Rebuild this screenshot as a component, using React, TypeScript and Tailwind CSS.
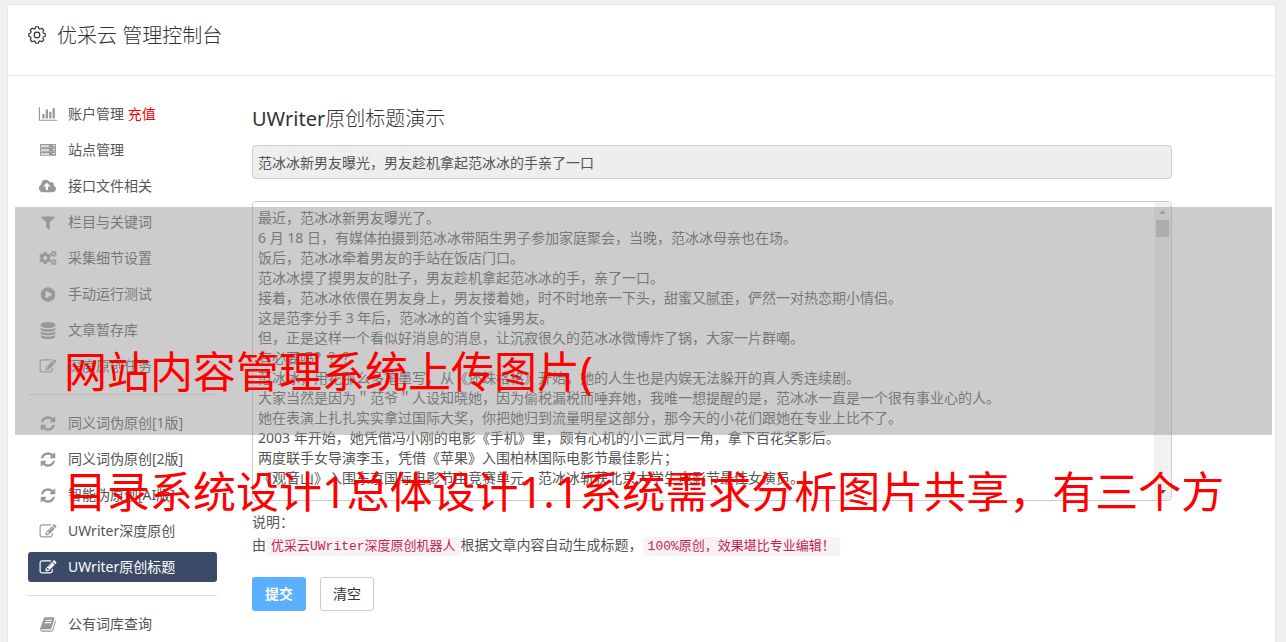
import type { ReactNode } from 'react'
import { FaCogs } from 'react-icons/fa'

const ICONS = {
  chart: 'M640 896v512h-256v-512h256zm384-512v1024h-256v-1024h256zm1024 1152v128h-2048v-1536h128v1408h1920zm-640-896v768h-256v-768h256zm384-384v1152h-256v-1152h256z',
  upload: 'M1280 928q0-14-9-23l-352-352q-9-9-23-9t-23 9l-351 351q-10 12-10 24 0 14 9 23t23 9h224v352q0 13 9.5 22.5t22.5 9.5h192q13 0 22.5-9.5t9.5-22.5v-352h224q13 0 22.5-9.5t9.5-22.5zm640 288q0 159-112.5 271.5t-271.5 112.5h-1088q-185 0-316.5-131.5t-131.5-316.5q0-130 70-240t188-165q-2-30-2-43 0-212 150-362t362-150q156 0 285.5 87t188.5 231q71-62 166-62 106 0 181 75t75 181q0 76-41 138 130 31 213.5 135.5t83.5 238.5z',
  filter: 'M1595 295q17 41-14 70l-493 493v742q0 42-39 59-13 5-25 5-27 0-45-19l-256-256q-19-19-19-45v-486l-493-493q-31-29-14-70 17-39 59-39h1280q42 0 59 39z',
  play: 'M896 128q209 0 385.5 103t279.5 279.5 103 385.5-103 385.5-279.5 279.5-385.5 103-385.5-103-279.5-279.5-103-385.5 103-385.5 279.5-279.5 385.5-103zm384 823q32-18 32-55t-32-55l-544-320q-31-19-64-1-32 19-32 56v640q0 37 32 56 16 8 32 8 17 0 32-9z',
  database: 'M896 768q237 0 443-43t325-127v170q0 69-103 128t-280 93.5-385 34.5-385-34.5-280-93.5-103-128v-170q119 84 325 127t443 43zm0 768q237 0 443-43t325-127v170q0 69-103 128t-280 93.5-385 34.5-385-34.5-280-93.5-103-128v-170q119 84 325 127t443 43zm0-384q237 0 443-43t325-127v170q0 69-103 128t-280 93.5-385 34.5-385-34.5-280-93.5-103-128v-170q119 84 325 127t443 43zm0-1152q208 0 385 34.5t280 93.5 103 128v128q0 69-103 128t-280 93.5-385 34.5-385-34.5-280-93.5-103-128v-128q0-69 103-128t280-93.5 385-34.5z',
  edit: 'M888 1184l116-116-152-152-116 116v56h96v96h56zm440-720q-16-16-33 1l-350 350q-17 17-1 33t33-1l350-350q17-17 1-33zm80 594v190q0 119-84.5 203.5t-203.5 84.5h-832q-119 0-203.5-84.5t-84.5-203.5v-832q0-119 84.5-203.5t203.5-84.5h832q63 0 117 25 15 7 18 23 3 17-9 29l-49 49q-14 14-32 8-23-6-45-6h-832q-66 0-113 47t-47 113v832q0 66 47 113t113 47h832q66 0 113-47t47-113v-126q0-13 9-22l64-64q15-15 35-7t20 29zm-96-738l288 288-672 672h-288v-288zm444 132l-92 92-288-288 92-92q28-28 68-28t68 28l152 152q28 28 28 68t-28 68z',
  refresh: 'M1639 1056q0 5-1 7-64 268-268 434.5t-478 166.5q-146 0-282.5-55t-243.5-157l-129 129q-19 19-45 19t-45-19-19-45v-448q0-26 19-45t45-19h448q26 0 45 19t19 45-19 45l-137 137q71 66 161 102t187 36q134 0 250-65t186-179q11-17 53-117 8-23 30-23h192q13 0 22.5 9.5t9.5 22.5zm25-800v448q0 26-19 45t-45 19h-448q-26 0-45-19t-19-45 19-45l138-138q-148-137-349-137-134 0-250 65t-186 179q-11 17-53 117-8 23-30 23h-199q-13 0-22.5-9.5t-9.5-22.5v-7q65-268 270-434.5t480-166.5q146 0 284 55.5t245 156.5l130-129q19-19 45-19t45 19 19 45z',
  book: 'M1703 478q40 57 18 129l-275 906q-19 64-76.5 107.5t-122.5 43.5h-923q-77 0-148.5-53.5t-99.5-131.5q-24-67-2-127 0-4 3-27t4-37q1-8-3-21.5t-3-19.5q2-11 8-21t16.5-23.5 16.5-23.5q23-38 45-91.5t30-91.5q3-10 .5-30t-.5-28q3-11 17-28t17-23q21-36 42-92t25-90q1-9-2.5-32t.5-28q4-13 22-30.5t22-22.5q19-26 42.5-84.5t27.5-96.5q1-8-3-25.5t-2-26.5q2-8 9-18t18-23 17-21q8-12 16.5-30.5t15-35 16-36 19.5-32 26.5-23.5 36-11.5 47.5 5.5l-1 3q38-9 51-9h761q74 0 114 56t18 130l-274 906q-36 119-71.5 153.5t-128.5 34.5h-869q-27 0-38 15-11 16-1 43 24 70 144 70h923q29 0 56-15.5t35-41.5l300-987q7-22 5-57 38 15 59 43zm-1064 2q-4 13 2 22.5t20 9.5h608q13 0 25.5-9.5t16.5-22.5l21-64q4-13-2-22.5t-20-9.5h-608q-13 0-25.5 9.5t-16.5 22.5zm-83 256q-4 13 2 22.5t20 9.5h608q13 0 25.5-9.5t16.5-22.5l21-64q4-13-2-22.5t-20-9.5h-608q-13 0-25.5 9.5t-16.5 22.5z',
}

function Icon({ name }: { name: keyof typeof ICONS }) {
  const wide = name === 'chart' || name === 'upload'
  return (
    <svg viewBox={wide ? '0 0 2048 1792' : '0 0 1792 1792'} className={wide ? 'h-4 w-5' : 'h-[17px] w-5'} fill="currentColor" aria-hidden="true">
      <path d={ICONS[name]} />
    </svg>
  )
}

function ServerIcon() {
  return (
    <svg viewBox="0 0 20 16" className="h-4 w-5" aria-hidden="true">
      {[2, 6, 10].map(y => (
        <g key={y}>
          <rect x="2" y={y} width="16" height="4" fill="currentColor" />
          <rect x="3" y={y + 1} width="8" height="2" fill="#d8d8d8" />
          <rect x="15" y={y + 1} width="2" height="1" fill="#fff" />
          <path d={`M2 ${y + 4}H18`} stroke="#fff" strokeWidth="0.5" />
        </g>
      ))}
    </svg>
  )
}

function GearIcon() {
  return (
    <svg viewBox="0 0 24 24" className="h-[18px] w-[18px]" fill="none" stroke="currentColor" strokeWidth="1.6" aria-hidden="true">
      <path d="M9.4 3.5L10.3 1H13.7L14.6 3.5L16.2 4.1L18.6 3L21 5.4L19.9 7.8L20.5 9.4L23 10.3V13.7L20.5 14.6L19.9 16.2L21 18.6L18.6 21L16.2 19.9L14.6 20.5L13.7 23H10.3L9.4 20.5L7.8 19.9L5.4 21L3 18.6L4.1 16.2L3.5 14.6L1 13.7V10.3L3.5 9.4L4.1 7.8L3 5.4L5.4 3L7.8 4.1Z" strokeLinejoin="round" />
      <circle cx="12" cy="12" r="3.8" />
    </svg>
  )
}

type Item = { label: string; icon: ReactNode; extra?: string; active?: boolean }

const groups: Item[][] = [
  [
    { label: '账户管理', icon: <Icon name="chart" />, extra: '充值' },
    { label: '站点管理', icon: <ServerIcon /> },
    { label: '接口文件相关', icon: <Icon name="upload" /> },
    { label: '栏目与关键词', icon: <Icon name="filter" /> },
    { label: '采集细节设置', icon: <FaCogs className="h-3.5 w-5" /> },
    { label: '手动运行测试', icon: <Icon name="play" /> },
    { label: '文章暂存库', icon: <Icon name="database" /> },
    { label: '深度原创任务', icon: <Icon name="edit" /> },
  ],
  [
    { label: '同义词伪原创[1版]', icon: <Icon name="refresh" /> },
    { label: '同义词伪原创[2版]', icon: <Icon name="refresh" /> },
    { label: '智能伪原创[AI版]', icon: <Icon name="refresh" /> },
    { label: 'UWriter深度原创', icon: <Icon name="edit" /> },
    { label: 'UWriter原创标题', icon: <Icon name="edit" />, active: true },
  ],
  [{ label: '公有词库查询', icon: <Icon name="book" /> }],
]

const article = `最近，范冰冰新男友曝光了。
6 月 18 日，有媒体拍摄到范冰冰带陌生男子参加家庭聚会，当晚，范冰冰母亲也在场。
饭后，范冰冰牵着男友的手站在饭店门口。
范冰冰摸了摸男友的肚子，男友趁机拿起范冰冰的手，亲了一口。
接着，范冰冰依偎在男友身上，男友搂着她，时不时地亲一下头，甜蜜又腻歪，俨然一对热恋期小情侣。
这是范李分手 3 年后，范冰冰的首个实锤男友。
但，正是这样一个看似好消息的消息，让沉寂很久的范冰冰微博炸了锅，大家一片群嘲。
有必要吗？？？
范冰冰，用花那么多笔墨写，从《还珠格格》开始，她的人生也是内娱无法躲开的真人秀连续剧。
大家当然是因为＂范爷＂人设知晓她，因为偷税漏税而唾弃她，我唯一想提醒的是，范冰冰一直是一个很有事业心的人。
她在表演上扎扎实实拿过国际大奖，你把她归到流量明星这部分，那今天的小花们跟她在专业上比不了。
2003 年开始，她凭借冯小刚的电影《手机》里，颇有心机的小三武月一角，拿下百花奖影后。
两度联手女导演李玉，凭借《苹果》入围柏林国际电影节最佳影片；
《观音山》入围东京国际电影节主竞赛单元，范冰冰斩获北京大学生电影节最佳女演员。`

function Sidebar() {
  return (
    <nav className="w-[189px] shrink-0">
      {groups.map((items, i) => (
        <div key={i}>
          {i > 0 && <hr className="my-[13px] border-[#ddd]" />}
          <ul className="flex flex-col gap-1.5">
            {items.map(item => (
              <li key={item.label}>
                <a
                  href="#"
                  className={
                    item.active
                      ? 'flex h-[30px] items-center gap-2.5 rounded-[3px] bg-[#3b4a66] px-2.5 text-white'
                      : 'flex h-[30px] items-center gap-2.5 px-2.5'
                  }
                >
                  <span className={item.active ? 'text-white' : 'text-[#999]'}>{item.icon}</span>
                  <span>
                    {item.label}
                    {item.extra && <span className="text-[#f00]"> {item.extra}</span>}
                  </span>
                </a>
              </li>
            ))}
          </ul>
        </div>
      ))}
    </nav>
  )
}

function Scrollbar() {
  return (
    <div className="flex w-[17px] shrink-0 flex-col items-center bg-[#f1f1f1] py-1.5 text-[#505050]" aria-hidden="true">
      <svg viewBox="0 0 7 4" className="mt-0.5 h-1 w-[7px]" fill="#a3a3a3"><path d="M3.5 0L7 4H0z" /></svg>
      <div className="mt-1.5 h-[17px] w-[13px] bg-[#c1c1c1]" />
      <svg viewBox="0 0 7 4" className="mt-auto h-1 w-[7px]" fill="currentColor"><path d="M0 0H7L3.5 4z" /></svg>
    </div>
  )
}

function Code({ children }: { children: ReactNode }) {
  return (
    <code className="rounded bg-[#f9f2f4] px-[5px] py-0.5 font-['Liberation_Mono','Noto_Sans_CJK_SC',monospace] text-[13px] text-[#c7254e]">
      {children}
    </code>
  )
}

export default function App() {
  return (
    <div className="relative flex min-h-screen flex-col overflow-hidden bg-[#f0f0f0] pt-[5px] pr-[11px] pl-2 font-['Noto_Sans','Noto_Sans_CJK_SC',sans-serif] text-sm leading-5 text-[#555]">
      <div className="flex-1 rounded-t-[3px] bg-white shadow-[0_0_0_1px_#e6e6e6]">
        <header className="flex h-[71px] items-start gap-[11px] border-b border-[#e5e5e5] px-5 pt-4 text-[#333]">
          <span className="pt-[5px]"><GearIcon /></span>
          <h1 className="text-xl leading-[30px] font-light">优采云 管理控制台</h1>
        </header>

        <div className="flex gap-[35px] pt-[23px] pr-[103px] pl-5">
          <Sidebar />
          <form className="min-w-0 flex-1 pt-1.5" onSubmit={e => e.preventDefault()}>
            <h2 className="mb-3 text-xl leading-7 text-[#333]">
              UWriter<span className="font-light">原创标题演示</span>
            </h2>
            <input
              type="text"
              aria-label="标题"
              readOnly
              value="范冰冰新男友曝光，男友趁机拿起范冰冰的手亲了一口"
              className="block h-[34px] w-full rounded border border-[#ccc] bg-[#eee] px-[5px]"
            />
            <div className="mt-[22px] flex h-[300px] overflow-hidden rounded border border-[#ccc] bg-white">
              <textarea
                aria-label="文章内容"
                defaultValue={article}
                className="min-w-0 flex-1 resize-none overflow-hidden px-[5px] py-1.5 whitespace-pre"
              />
              <Scrollbar />
            </div>
            <p className="mt-[11px]">说明：</p>
            <p className="mt-[3px]">
              由<Code>优采云UWriter深度原创机器人</Code>根据文章内容自动生成标题，<Code>100%原创，效果堪比专业编辑！</Code>
            </p>
            <div className="mt-5 flex gap-3.5">
              <button type="submit" className="h-[34px] w-[54px] rounded-[3px] bg-[#5bafff] font-bold text-white">提交</button>
              <button type="reset" className="h-[34px] w-[54px] rounded-[3px] border border-[#ccc] bg-white text-[#333]">清空</button>
            </div>
          </form>
        </div>
      </div>

      {/* caption laid over the console */}
      <div className="pointer-events-none absolute inset-x-3.5 top-[207px] pl-px">
        <div className="h-[228px] bg-[#999]/50" />
        <div className="absolute inset-x-0 top-0 pt-[105px] pl-[50px] text-[43px] leading-[120px] whitespace-nowrap text-[#f00]">
          <p>网站内容管理系统上传图片(</p>
          <p>目录系统设计1总体设计1.1系统需求分析图片共享，有三个方</p>
        </div>
      </div>
    </div>
  )
}
